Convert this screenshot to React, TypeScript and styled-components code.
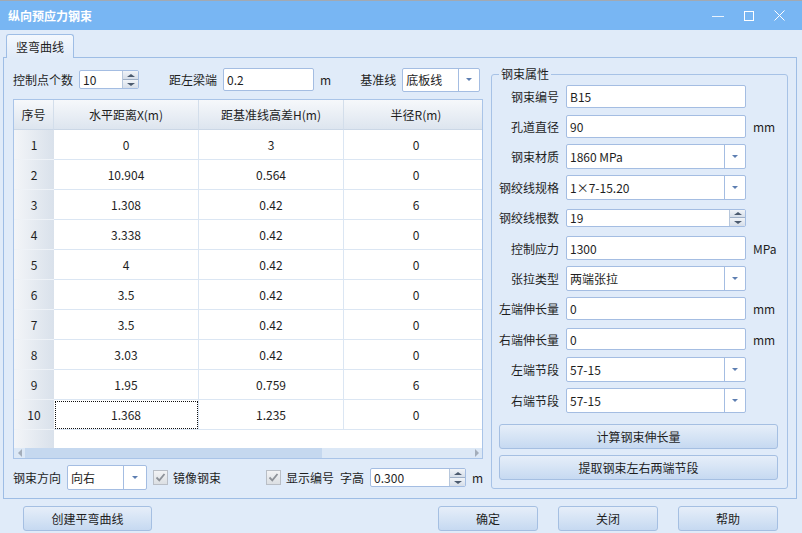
import React from "react";
import styled, { createGlobalStyle } from "styled-components";

const GlobalStyle = createGlobalStyle`
  html, body {
    margin: 0;
    padding: 0;
  }
  body {
    font-family: "Microsoft YaHei", "Noto Sans CJK SC", sans-serif;
    font-size: 12px;
    color: #1e1e1e;
  }
`;

const Window = styled.div`
  width: 802px;
  height: 533px;
  background: #e0ebf9;
  display: flex;
  flex-direction: column;
  overflow: hidden;
`;

const TitleBar = styled.div`
  height: 30px;
  flex-shrink: 0;
  box-sizing: border-box;
  border-top: 1px solid #a2a9b2;
  background: #78b6f3;
  display: flex;
  align-items: center;
  padding: 0 7px 0 8px;
`;

const Title = styled.div`
  flex: 1;
  color: #fff;
  font-weight: bold;
  font-size: 12px;
`;

const WinButton = styled.div`
  width: 31px;
  height: 28px;
  display: flex;
  align-items: center;
  justify-content: center;
`;

const TabStrip = styled.div`
  height: 23px;
  margin-top: 4px;
  padding-left: 6px;
  display: flex;
  align-items: flex-start;
  flex-shrink: 0;
`;

const Tab = styled.div`
  position: relative;
  z-index: 1;
  height: 24px;
  box-sizing: border-box;
  padding: 0 9px;
  display: flex;
  align-items: center;
  border: 1px solid #9ebde5;
  border-bottom: none;
  border-radius: 3px 3px 0 0;
  background: linear-gradient(#f4f8fd, #e0ebf9);
`;

const TabPanel = styled.div`
  height: 442px;
  margin: 0 5px 0 3px;
  box-sizing: border-box;
  border: 1px solid #9ebde5;
  padding: 9px 8px 9px 9px;
  display: flex;
  gap: 8px;
  flex-shrink: 0;
`;

const LeftPane = styled.div`
  width: 470px;
  display: flex;
  flex-direction: column;
`;

const ControlRow = styled.div<{ $top?: number }>`
  display: flex;
  align-items: center;
  height: 25px;
  margin-top: ${p => p.$top || 0}px;
  flex-shrink: 0;
  white-space: nowrap;
`;

const Label = styled.span<{ $left?: number; $right?: number }>`
  margin-left: ${p => p.$left || 0}px;
  margin-right: ${p => (p.$right === undefined ? 6 : p.$right)}px;
  white-space: nowrap;
`;

const Unit = styled.span`
  margin-left: 6px;
  white-space: nowrap;
`;

const Field = styled.div<{ $w: number; $h: number }>`
  width: ${p => p.$w}px;
  height: ${p => p.$h}px;
  box-sizing: border-box;
  border: 1px solid #a4bde2;
  border-radius: 2px;
  background: #fff;
  display: flex;
  align-items: center;
  overflow: hidden;
  flex-shrink: 0;
`;

const FieldText = styled.span`
  flex: 1;
  padding-left: 3px;
  white-space: nowrap;
`;

const DropPart = styled.div<{ $w?: number }>`
  width: ${p => p.$w || 20}px;
  align-self: stretch;
  border-left: 1px solid #a4bde2;
  display: flex;
  align-items: center;
  justify-content: center;
`;

const DropArrow = styled.div`
  width: 0;
  height: 0;
  border-left: 3px solid transparent;
  border-right: 3px solid transparent;
  border-top: 3px solid #5d7eb1;
`;

const SpinPart = styled.div`
  width: 15px;
  align-self: stretch;
  display: flex;
  flex-direction: column;
  border-left: 1px solid #b7c7dc;
`;

const SpinHalf = styled.div<{ $down?: boolean }>`
  flex: 1;
  display: flex;
  align-items: center;
  justify-content: center;
  background: linear-gradient(#f1f4f8, #d6dee9);
  border-top: ${p => (p.$down ? "1px solid #9eafc6" : "none")};
`;

const SpinArrow = styled.div<{ $down?: boolean }>`
  width: 0;
  height: 0;
  border-left: 4px solid transparent;
  border-right: 4px solid transparent;
  ${p => (p.$down ? "border-top: 3px solid #4b5a6e;" : "border-bottom: 3px solid #4b5a6e;")}
`;

const CheckBox = styled.div<{ $left?: number }>`
  width: 15px;
  height: 15px;
  box-sizing: border-box;
  margin-left: ${p => p.$left || 0}px;
  margin-right: 5px;
  border: 1px solid #b9bec6;
  background: linear-gradient(#f2f3f5, #dcdfe3);
  display: flex;
  align-items: center;
  justify-content: center;
  flex-shrink: 0;
`;

const Grid = styled.div`
  width: 470px;
  height: 360px;
  margin-top: 7px;
  box-sizing: border-box;
  border: 1px solid #a9c4e8;
  background: #fff;
  overflow: hidden;
  display: flex;
  flex-direction: column;
  flex-shrink: 0;
`;

const GridRow = styled.div<{ $h?: number }>`
  display: flex;
  height: ${p => (p.$h ? `${p.$h}px` : "auto")};
  flex: ${p => (p.$h ? "0 0 auto" : "1")};
`;

const HeadCell = styled.div<{ $w: number }>`
  width: ${p => p.$w}px;
  flex-shrink: 0;
  box-sizing: border-box;
  display: flex;
  align-items: center;
  justify-content: center;
  background: linear-gradient(#f6f8fb, #dde5ef);
  border-right: 1px solid #d3deeb;
  border-bottom: 1px solid #cbd7e6;
`;

const RowHead = styled.div<{ $w: number }>`
  width: ${p => p.$w}px;
  flex-shrink: 0;
  box-sizing: border-box;
  display: flex;
  align-items: center;
  justify-content: center;
  background: linear-gradient(to right, #f3f5f8, #d9e1eb);
  border-bottom: 1px solid #eef2f7;
`;

const Cell = styled.div<{ $w: number; $focus?: boolean }>`
  width: ${p => p.$w}px;
  flex-shrink: 0;
  box-sizing: border-box;
  display: flex;
  align-items: center;
  justify-content: center;
  background: #fff;
  border-right: 1px solid #dbe6f3;
  border-bottom: 1px solid #dbe6f3;
  ${p => (p.$focus ? "outline: 1px dotted #111; outline-offset: -2px;" : "")}
`;

const FillCell = styled.div<{ $w: number; $head?: boolean }>`
  width: ${p => p.$w}px;
  flex-shrink: 0;
  background: ${p => (p.$head ? "linear-gradient(to right, #f3f5f8, #d9e1eb)" : "#fff")};
`;

const HScroll = styled.div`
  height: 10px;
  flex-shrink: 0;
  display: flex;
  align-items: center;
  background: #dce8f6;
`;

const ScrollArrow = styled.div<{ $right?: boolean }>`
  width: 11px;
  height: 10px;
  display: flex;
  align-items: center;
  justify-content: center;
  margin-left: ${p => (p.$right ? "auto" : "0")};
  &::before {
    content: "";
    width: 0;
    height: 0;
    border-top: 4px solid transparent;
    border-bottom: 4px solid transparent;
    ${p => (p.$right ? "border-left: 4px solid #a3adba;" : "border-right: 4px solid #a3adba;")}
  }
`;

const ScrollThumb = styled.div`
  width: 297px;
  height: 10px;
  background: #c5d8ef;
`;

const GroupBox = styled.fieldset`
  width: 297px;
  margin: 0;
  min-width: 0;
  box-sizing: border-box;
  border: 1px solid #a7c2e6;
  border-radius: 3px;
  padding: 0 9px 0 7px;
  display: flex;
  flex-direction: column;
`;

const Legend = styled.legend`
  padding: 0 2px;
  line-height: 14px;
`;

const PropRow = styled.div`
  height: 30.4px;
  display: grid;
  grid-template-columns: 60px 180px auto;
  column-gap: 7px;
  align-items: center;
`;

const PropLabel = styled.span`
  text-align: right;
  white-space: nowrap;
`;

const PropUnit = styled.span`
  white-space: nowrap;
`;

const Button = styled.div<{ $w?: number; $top?: number }>`
  width: ${p => (p.$w ? `${p.$w}px` : "auto")};
  height: 25px;
  margin-top: ${p => p.$top || 0}px;
  box-sizing: border-box;
  flex-shrink: 0;
  border: 1px solid #a5bfe2;
  border-radius: 3px;
  background: linear-gradient(#e6eef9 0%, #d6e4f5 50%, #c6d9f1 100%);
  display: flex;
  align-items: center;
  justify-content: center;
  white-space: nowrap;
`;

const Footer = styled.div`
  height: 25px;
  margin-top: 7px;
  padding: 0 24px 0 23px;
  display: flex;
  gap: 20px;
  flex-shrink: 0;
`;

const Spacer = styled.div`
  flex: 1;
`;

type Kind = "text" | "combo" | "spin";

const TextBox = ({ w, h, value, kind = "text", dropW }: { w: number; h: number; value: string; kind?: Kind; dropW?: number }) => (
  <Field $w={w} $h={h}>
    <FieldText>{value}</FieldText>
    {kind === "combo" && (
      <DropPart $w={dropW}>
        <DropArrow />
      </DropPart>
    )}
    {kind === "spin" && (
      <SpinPart>
        <SpinHalf>
          <SpinArrow />
        </SpinHalf>
        <SpinHalf $down>
          <SpinArrow $down />
        </SpinHalf>
      </SpinPart>
    )}
  </Field>
);

const Check = ({ left }: { left?: number }) => (
  <CheckBox $left={left}>
    <svg width="11" height="11" viewBox="0 0 11 11">
      <path d="M1.5 5.5 L4.3 8.3 L9.5 2" fill="none" stroke="#8e9299" strokeWidth="1.8" />
    </svg>
  </CheckBox>
);

const colWidths = [40, 145, 145, 145];
const headers = ["序号", "水平距离X(m)", "距基准线高差H(m)", "半径R(m)"];
const rows = [
  ["0", "3", "0"],
  ["10.904", "0.564", "0"],
  ["1.308", "0.42", "6"],
  ["3.338", "0.42", "0"],
  ["4", "0.42", "0"],
  ["3.5", "0.42", "0"],
  ["3.5", "0.42", "0"],
  ["3.03", "0.42", "0"],
  ["1.95", "0.759", "6"],
  ["1.368", "1.235", "0"],
];

const props: { label: string; value: string; kind: Kind; h: number; unit?: string }[] = [
  { label: "钢束编号", value: "B15", kind: "text", h: 23 },
  { label: "孔道直径", value: "90", kind: "text", h: 23, unit: "mm" },
  { label: "钢束材质", value: "1860 MPa", kind: "combo", h: 25 },
  { label: "钢绞线规格", value: "1×7-15.20", kind: "combo", h: 25 },
  { label: "钢绞线根数", value: "19", kind: "spin", h: 18 },
  { label: "控制应力", value: "1300", kind: "text", h: 24, unit: "MPa" },
  { label: "张拉类型", value: "两端张拉", kind: "combo", h: 25 },
  { label: "左端伸长量", value: "0", kind: "text", h: 23, unit: "mm" },
  { label: "右端伸长量", value: "0", kind: "text", h: 22, unit: "mm" },
  { label: "左端节段", value: "57-15", kind: "combo", h: 25 },
  { label: "右端节段", value: "57-15", kind: "combo", h: 25 },
];

export default function App() {
  return (
    <>
      <GlobalStyle />
      <Window>
        <TitleBar>
          <Title>纵向预应力钢束</Title>
          <WinButton>
            <svg width="12" height="10" viewBox="0 0 12 10">
              <path d="M0 5.5 H12" stroke="#e8f2fd" strokeWidth="1" />
            </svg>
          </WinButton>
          <WinButton>
            <svg width="10" height="10" viewBox="0 0 10 10">
              <rect x="0.5" y="0.5" width="9" height="9" fill="none" stroke="#fff" strokeWidth="1" />
            </svg>
          </WinButton>
          <WinButton>
            <svg width="11" height="11" viewBox="0 0 11 11">
              <path d="M0.5 0.5 L10.5 10.5 M10.5 0.5 L0.5 10.5" stroke="#fff" strokeWidth="1" />
            </svg>
          </WinButton>
        </TitleBar>

        <TabStrip>
          <Tab>竖弯曲线</Tab>
        </TabStrip>

        <TabPanel>
          <LeftPane>
            <ControlRow>
              <Label>控制点个数</Label>
              <TextBox w={60} h={19} value="10" kind="spin" />
              <Label $left={30}>距左梁端</Label>
              <TextBox w={91} h={23} value="0.2" />
              <Unit>m</Unit>
              <Label $left={29}>基准线</Label>
              <TextBox w={78} h={24} value="底板线" kind="combo" />
            </ControlRow>

            <Grid>
              <GridRow $h={30}>
                {headers.map((h, i) => (
                  <HeadCell key={h} $w={colWidths[i]}>{h}</HeadCell>
                ))}
              </GridRow>
              {rows.map((r, ri) => (
                <GridRow key={ri} $h={30}>
                  <RowHead $w={colWidths[0]}>{ri + 1}</RowHead>
                  {r.map((v, ci) => (
                    <Cell key={ci} $w={colWidths[ci + 1]} $focus={ri === 9 && ci === 0}>
                      {v}
                    </Cell>
                  ))}
                </GridRow>
              ))}
              <GridRow>
                <FillCell $w={colWidths[0]} $head />
                <FillCell $w={435} />
              </GridRow>
              <HScroll>
                <ScrollArrow />
                <ScrollThumb />
                <ScrollArrow $right />
              </HScroll>
            </Grid>

            <ControlRow $top={6}>
              <Label>钢束方向</Label>
              <TextBox w={80} h={25} value="向右" kind="combo" dropW={22} />
              <Check left={6} />
              <Label $right={0}>镜像钢束</Label>
              <Check left={45} />
              <Label>显示编号</Label>
              <Label>字高</Label>
              <TextBox w={96} h={19} value="0.300" kind="spin" />
              <Unit>m</Unit>
            </ControlRow>
          </LeftPane>

          <GroupBox>
            <Legend>钢束属性</Legend>
            {props.map(p => (
              <PropRow key={p.label}>
                <PropLabel>{p.label}</PropLabel>
                <TextBox w={180} h={p.h} value={p.value} kind={p.kind} />
                <PropUnit>{p.unit || ""}</PropUnit>
              </PropRow>
            ))}
            <Button $top={9}>计算钢束伸长量</Button>
            <Button $top={6}>提取钢束左右两端节段</Button>
          </GroupBox>
        </TabPanel>

        <Footer>
          <Button $w={129}>创建平弯曲线</Button>
          <Spacer />
          <Button $w={100}>确定</Button>
          <Button $w={100}>关闭</Button>
          <Button $w={100}>帮助</Button>
        </Footer>
      </Window>
    </>
  );
}
